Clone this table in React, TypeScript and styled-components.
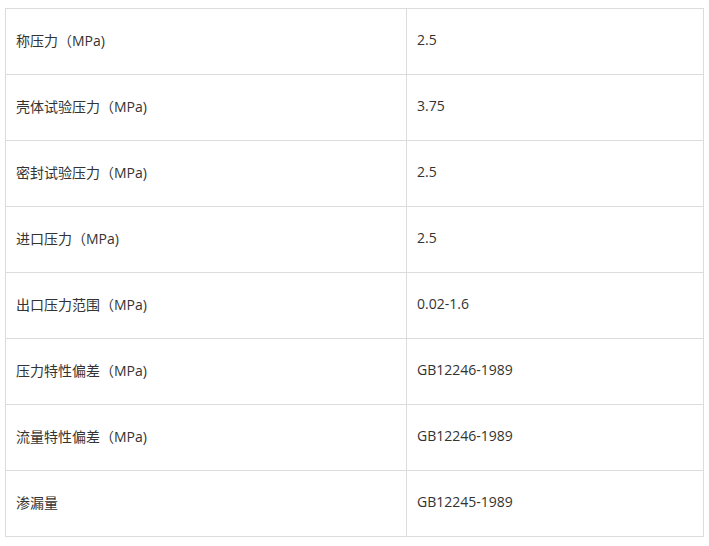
import React from "react";
import styled, { createGlobalStyle } from "styled-components";

const Global = createGlobalStyle`
  body {
    margin: 8px 5px;
    background: #fff;
    font-family: "Open Sans", "Noto Sans CJK SC", sans-serif;
  }
`;

const Table = styled.table`
  width: 699px;
  border-collapse: collapse;
  table-layout: fixed;
  color: #333;
  font-size: 14px;
`;

const Row = styled.tr`
  height: 66px;
`;

const Cell = styled.td<{ $w?: number }>`
  border: 1px solid #dcdcdc;
  padding: 0 10px 4px 10px;
  vertical-align: middle;
  width: ${(p) => (p.$w ? `${p.$w}px` : "auto")};
  box-sizing: border-box;
`;

const rows: [string, string][] = [
  ["称压力（MPa)", "2.5"],
  ["壳体试验压力（MPa)", "3.75"],
  ["密封试验压力（MPa)", "2.5"],
  ["进口压力（MPa)", "2.5"],
  ["出口压力范围（MPa)", "0.02-1.6"],
  ["压力特性偏差（MPa)", "GB12246-1989"],
  ["流量特性偏差（MPa)", "GB12246-1989"],
  ["渗漏量", "GB12245-1989"],
];

export default function App() {
  return (
    <>
      <Global />
      <Table>
        <tbody>
          {rows.map(([k, v], i) => (
            <Row key={i}>
              <Cell $w={401}>{k}</Cell>
              <Cell>{v}</Cell>
            </Row>
          ))}
        </tbody>
      </Table>
    </>
  );
}
